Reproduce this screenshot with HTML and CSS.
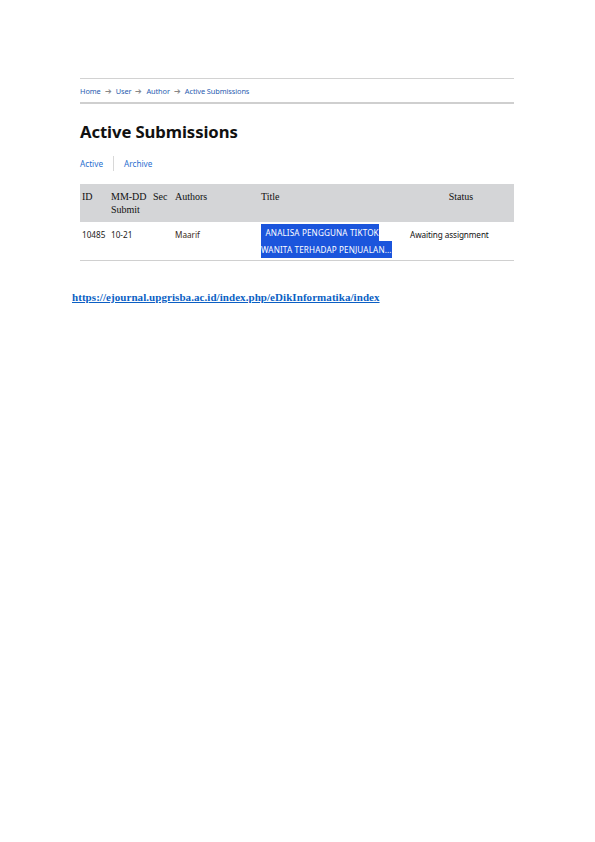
FILE: index.html
```html
<!DOCTYPE html>
<html>
<head>
<meta charset="utf-8">
<link rel="stylesheet" href="styles.css">
</head>
<body>
<div class="page">
  <div class="shot">
    <nav class="crumbs">
      <a href="#">Home</a><span class="arr">&#x2794;</span><a href="#">User</a><span class="arr">&#x2794;</span><a href="#">Author</a><span class="arr">&#x2794;</span><a href="#" class="cur">Active Submissions</a>
    </nav>
    <h1 class="title">Active Submissions</h1>
    <div class="tabs">
      <a href="#">Active</a><span class="sep"></span><a href="#">Archive</a>
    </div>
    <table class="subs">
      <thead>
        <tr>
          <th class="c-id">ID</th>
          <th class="c-date">MM-DD<br>Submit</th>
          <th class="c-sec">Sec</th>
          <th class="c-auth">Authors</th>
          <th class="c-title">Title</th>
          <th class="c-status">Status</th>
        </tr>
      </thead>
      <tbody>
        <tr>
          <td class="c-id">10485</td>
          <td class="c-date">10-21</td>
          <td class="c-sec"></td>
          <td class="c-auth">Maarif</td>
          <td class="c-title"><a href="#" class="tl">&nbsp; ANALISA PENGGUNA TIKTOK WANITA TERHADAP PENJUALAN...</a></td>
          <td class="c-st">Awaiting assignment</td>
        </tr>
      </tbody>
    </table>
  </div>
  <p class="link"><a href="#">https://ejournal.upgrisba.ac.id/index.php/eDikInformatika/index</a></p>
</div>
</body>
</html>
```
FILE: styles.css
```css
html, body { margin: 0; padding: 0; background: #fff; }
.page { padding-top: 78px; }
.shot { margin-left: 80px; width: 434px; font-family: "Noto Sans", sans-serif; }
.crumbs {
  border-top: 1px solid #d2d2d2;
  border-bottom: 2px solid #cfcfcf;
  height: 23px;
  line-height: 24px;
  font-size: 7.4px;
  color: #777;
}
.crumbs a { color: #2a5db0; text-decoration: none; letter-spacing: -0.1px; }
.crumbs .arr { color: #888; font-size: 8px; margin: 0 4px; }
.title {
  margin: 16px 0 0;
  font-size: 16.7px;
  font-weight: bold;
  line-height: 24px;
  color: #111;
  letter-spacing: -0.1px;
}
.tabs {
  margin-top: 12px;
  height: 15px;
  display: flex;
  align-items: center;
  font-size: 8.2px;
}
.tabs a { color: #2a6fcf; text-decoration: none; }
.tabs .sep { width: 1px; height: 15px; background: #d8d8d8; margin: 0 10px; }
.subs {
  margin-top: 13px;
  width: 434px;
  border-collapse: collapse;
  table-layout: fixed;
}
.subs th {
  background: #d4d5d7;
  font-family: "Liberation Serif", serif;
  font-weight: normal;
  font-size: 10px;
  line-height: 13px;
  text-align: left;
  vertical-align: top;
  padding: 6px 0 0 2px;
  height: 32px;
  color: #111;
}
.subs td {
  font-size: 8.2px;
  vertical-align: top;
  padding: 4px 0 0 2px;
  color: #222;
  border-bottom: 1px solid #d0d0d0;
  line-height: 17px;
  height: 34px;
}
.subs .c-id { width: 27px; }
.subs .c-date { width: 40px; }
.subs .c-sec { width: 20px; }
.subs .c-auth { width: 86px; }
.subs .c-title { width: 145px; padding-left: 0; }
.subs th.c-status { text-align: center; }
.subs td.c-title { padding-top: 3px; line-height: 16.5px; }
.subs .c-st { padding-left: 4px; color: #111; letter-spacing: -0.1px; }
.subs td.c-auth { color: #3a2a1a; }
.tl {
  background: #1b55dc;
  color: #fff;
  text-decoration: none;
  font-size: 8.1px;
  letter-spacing: 0.15px;
  padding: 3px 0 3px;
  -webkit-box-decoration-break: clone;
  box-decoration-break: clone;
}
.link { margin: 30px 0 0 72px; font-family: "Liberation Serif", serif; font-size: 11px; font-weight: bold; letter-spacing: 0.06px; }
.link a { color: #0b5fc4; text-decoration: underline; }
```
